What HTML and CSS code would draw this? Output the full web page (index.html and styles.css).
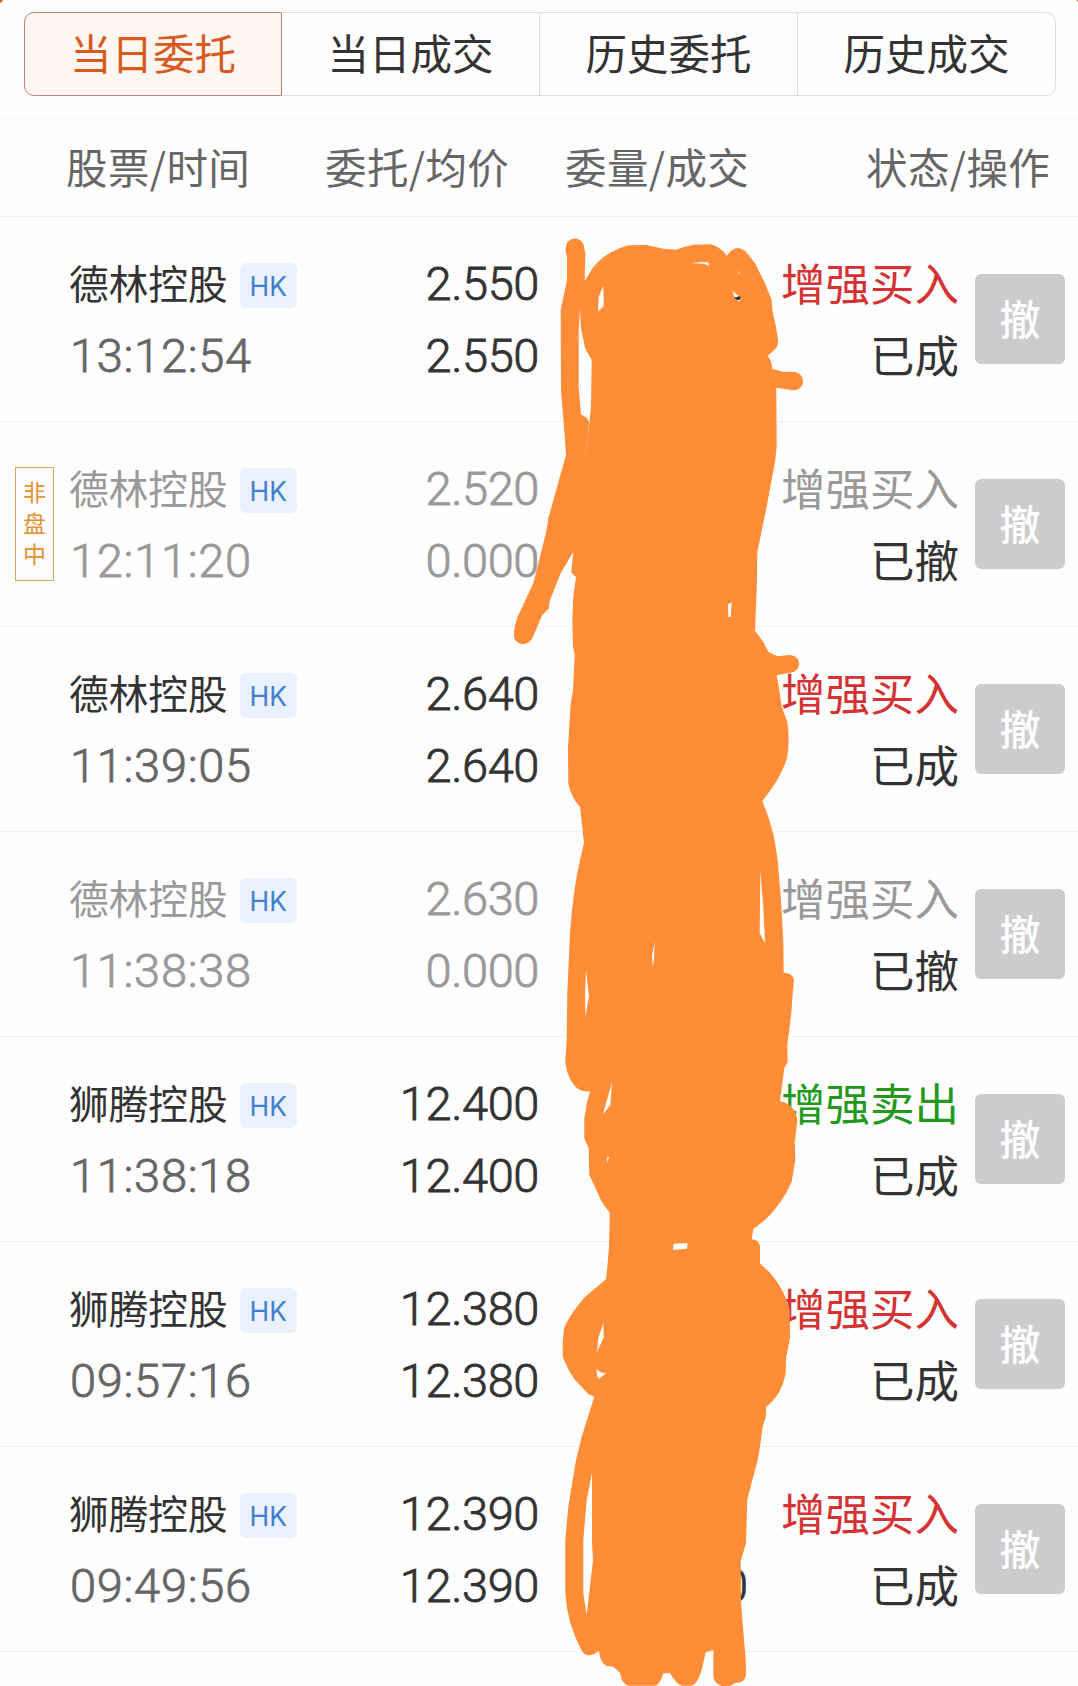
FILE: index.html
```html
<!DOCTYPE html>
<html lang="zh-CN">
<head>
<meta charset="utf-8">
<title>当日委托</title>
<link rel="stylesheet" href="styles.css">
</head>
<body>
<main class="page">
  <nav class="tabs">
    <a class="tab active">当日委托</a>
    <a class="tab">当日成交</a>
    <a class="tab">历史委托</a>
    <a class="tab">历史成交</a>
  </nav>
  <header class="columns">
    <span>股票/时间</span>
    <span>委托/均价</span>
    <span>委量/成交</span>
    <span>状态/操作</span>
  </header>
  <section class="orders">
    <article class="order">
      <div class="flag"></div>
      <div class="stock"><div class="name">德林控股<span class="market">HK</span></div><div class="num time">13:12:54</div></div>
      <div class="num price"><div>2.550</div><div>2.550</div></div>
      <div class="num qty"><div>0</div><div>0</div></div>
      <div class="status"><div class="buy">增强买入</div><div>已成</div></div>
      <button class="cancel">撤</button>
    </article>
    <article class="order withdrawn">
      <div class="flag"><span class="session">非<br>盘<br>中</span></div>
      <div class="stock"><div class="name">德林控股<span class="market">HK</span></div><div class="num time">12:11:20</div></div>
      <div class="num price"><div>2.520</div><div>0.000</div></div>
      <div class="num qty"></div>
      <div class="status"><div class="side">增强买入</div><div>已撤</div></div>
      <button class="cancel">撤</button>
    </article>
    <article class="order">
      <div class="flag"></div>
      <div class="stock"><div class="name">德林控股<span class="market">HK</span></div><div class="num time">11:39:05</div></div>
      <div class="num price"><div>2.640</div><div>2.640</div></div>
      <div class="num qty"></div>
      <div class="status"><div class="buy">增强买入</div><div>已成</div></div>
      <button class="cancel">撤</button>
    </article>
    <article class="order withdrawn">
      <div class="flag"></div>
      <div class="stock"><div class="name">德林控股<span class="market">HK</span></div><div class="num time">11:38:38</div></div>
      <div class="num price"><div>2.630</div><div>0.000</div></div>
      <div class="num qty"></div>
      <div class="status"><div class="side">增强买入</div><div>已撤</div></div>
      <button class="cancel">撤</button>
    </article>
    <article class="order">
      <div class="flag"></div>
      <div class="stock"><div class="name">狮腾控股<span class="market">HK</span></div><div class="num time">11:38:18</div></div>
      <div class="num price"><div>12.400</div><div>12.400</div></div>
      <div class="num qty"></div>
      <div class="status"><div class="sell">增强卖出</div><div>已成</div></div>
      <button class="cancel">撤</button>
    </article>
    <article class="order">
      <div class="flag"></div>
      <div class="stock"><div class="name">狮腾控股<span class="market">HK</span></div><div class="num time">09:57:16</div></div>
      <div class="num price"><div>12.380</div><div>12.380</div></div>
      <div class="num qty"></div>
      <div class="status"><div class="buy">增强买入</div><div>已成</div></div>
      <button class="cancel">撤</button>
    </article>
    <article class="order">
      <div class="flag"></div>
      <div class="stock"><div class="name">狮腾控股<span class="market">HK</span></div><div class="num time">09:49:56</div></div>
      <div class="num price"><div>12.390</div><div>12.390</div></div>
      <div class="num qty"><div>0</div><div>0</div></div>
      <div class="status"><div class="buy">增强买入</div><div>已成</div></div>
      <button class="cancel">撤</button>
    </article>
  </section>
  <!-- Marker scribble hiding the quantity column -->
  <svg class="marker" width="1078" height="1686" viewBox="0 0 1078 1686" aria-hidden="true">
    <path fill="#d9622b" d="M0 0H3L2 2L0 3Z M1078 0h-1.500l1.500 2Z"/>
    <path fill="#ff8d38" fill-rule="evenodd" d="M584.700 281 L588.300 275 L592 269 L596.700 263.300 L603 257.500 L610 252.700 L619 248.500 L628.300 245.300 L646.700 245 L663.300 248.700 L676 249.700 L684 247 L693.300 244.700 L710.700 244.300 Q721 247 726.700 255.700 Q732 248 738.300 248 Q744 249 748 254 L755 263.300 L765 283.300 L771.700 300 L772.300 310 L776 326.700 L778 340 Q778 346 776 348.300 L767.700 356 Q772 361 772.300 369 L783.300 371.700 L795 372 Q803 374 803.300 381.700 Q802 390 793.300 390.300 L776.300 387.700 L776.700 446.700 L775 461.700 L766.700 506.700 L757.300 551.700 L756.700 590 L755 631 L763.300 641.700 L768.300 651.700 L777.300 656.300 L790 655 Q799 656 799.300 664 Q798 672 790 672.700 L776.700 675.300 L779.300 690 L781.700 706.700 L787.300 721.700 Q790 740 787.300 756.700 Q782 777 762.300 801 L768.300 816.700 L774 836.700 L777.700 860 L780.700 896.700 L783.300 940 L783.700 972.700 Q793 973 794 980 L792.700 993.300 L791.300 1013.300 L787.300 1045 L787.700 1061.700 L784.300 1068.300 L780 1101.300 Q790 1103 795 1111.700 Q798 1119 797 1123.300 L794.700 1143.300 L795.300 1160 L791.700 1181.700 Q782 1204 765 1220 L753.300 1229 L751.700 1239.300 Q760 1240 760 1248.300 L760 1263.300 L770 1272.700 Q785 1290 789.700 1310 L790 1338.300 L786 1358.300 L785.700 1373.300 Q781 1396 766.300 1406.700 L765.700 1416.700 L762.700 1426.700 L760 1446.700 L757.700 1460 L747.300 1499.300 L746 1543.300 L740.700 1561 L741 1603.300 L745.700 1660 L746 1675 Q745 1683 736 1682.700 L730 1686 L721.700 1686 Q713 1683 713.300 1675 L713.300 1650 L705.700 1652.300 L701.700 1670 Q697 1685 691.700 1685.700 L681.700 1685.700 Q676 1684 670 1673 L663.300 1673.300 Q660 1685 655 1685.700 L628.300 1685.700 Q621 1683 620 1672.700 L613.300 1666.700 L606 1665.700 Q600 1662 599 1650.700 Q588 1660 581.700 1650.700 Q567 1623 565.300 1593.300 L565.300 1540 L568.300 1506.700 L576 1460 L581.700 1436.700 L594.300 1396.700 L588.300 1394 L575 1380 Q567 1368 562.700 1356.700 L562.700 1343 L564 1328.300 Q568 1317 585 1296.700 L606 1279.300 L607.300 1266.700 L609 1246.700 L609.700 1212.700 L601.700 1201.700 L589.300 1175 L588.700 1148.300 L584.300 1138.300 L584.300 1118.300 Q586 1104 590 1091 Q575 1094 567.700 1073.300 Q565 1064 565.300 1060 L566.700 1040 L567.300 993.300 L570 933.300 Q573 890 580 860 L584 842.700 L580 806.700 Q571 798 568.300 783.300 L568 746.700 L570.700 703.300 L573 690 L574.700 655 L573 646.700 L572.300 620 L573.300 596.700 L576 577 L571.300 572.700 L573.300 551.700 L560.700 573.300 L550 600 L548.300 609.300 L542.300 615 L532.300 638.300 Q529 644 522.700 644.300 Q514 643 514 635 Q514 626 518 616 L533.300 583.300 L546.700 530 L548.300 518.300 L566 455 L565 440 L561 390 L560.700 310 L567 280 L567 256.700 Q564 250 567 242.500 Q572 237 578 239 Q583 241 584 246.700 L585.300 253.300 Z
    M580 307 L578.700 330 L578.700 386.700 L581 414.300 L586.700 417.700 L589 421.700 L588 436.700 L584.300 460 L587.700 440 L591 406.700 L591.700 360 L585 348 L580.700 326.700 Z
    M603.300 285.700 L598.700 296.700 L598 311.700 L603.700 306 Z
    M691.700 263.300 L700 262 L708 262.300 L709.300 265.700 L703.300 263.700 Z
    M737.300 270 L740.700 274.300 L738.700 273.300 Z
    M732.300 291 L740.700 297.300 L739.300 301.700 L735 298.300 Z
    M728 604 L731.700 602.700 L730.700 617 L728.300 617 Z
    M760.300 871.700 L759.700 933.300 L765 943.300 L763.300 906.700 Z
    M654.700 941.700 L652 955 L652.700 966.700 L654 960 Z
    M586 970 L585 993 L585.300 1016.700 L589 996.700 Z
    M612 1082 L603 1114.300 L610.300 1105 Z
    M607.300 1156.700 L609 1157.300 L607 1162.700 Z
    M673.700 1243.700 L687.700 1243 L687 1248.700 L673 1250 Z
    M603.300 1323.300 L598.300 1338.300 L597 1352.300 L603.700 1337.300 Z
    M596.300 1369.300 L601.700 1372.700 L606 1373.300 L599.300 1378.700 L597.300 1376.700 Z
    M592 1472.700 L586.700 1500 L583.300 1540 L583.300 1593.300 L586.700 1615 L593 1560 L592 1543.300 Z"/>
  </svg>
</main>
</body>
</html>
```
FILE: styles.css
```css
* { box-sizing: border-box; }

body {
  margin: 0;
  background: #fefefe;
  color: #333;
  font-family: "Noto Sans CJK SC", sans-serif;
}

.page {
  position: relative;
  width: 1078px;
  height: 1686px;
  padding-top: 12px;
  overflow: hidden;
}

.tabs {
  display: grid;
  grid-template-columns: repeat(4, 1fr);
  height: 84px;
  margin: 0 22px 0 24px;
}

.tab {
  border: 1px solid #dcdedf;
  border-left-width: 0;
  font-size: 41.5px;
  line-height: 79px;
  text-align: center;
}

.tab:last-child { border-radius: 0 10px 10px 0; }

.tab.active {
  border: 1px solid #c08468;
  border-radius: 10px 0 0 10px;
  background: #fdf6f1;
  color: #d85a1c;
}

.columns {
  display: grid;
  grid-template-columns: 259px 240px 301px 1fr;
  height: 98px;
  margin-top: 23px;
  padding-left: 66px;
  border-top: 1px solid #f8f8f8;
  border-bottom: 1px solid #f0f1f2;
  color: #666;
  font-size: 41.5px;
  letter-spacing: 0.4px;
  line-height: 93px;
  white-space: nowrap;
}

.order {
  display: grid;
  grid-template-columns: 69px 301px 169px 209px 211px 106px;
  height: 205px;
  padding-top: 31px;
  border-bottom: 1px solid #f0f1f2;
  font-size: 44.5px;
  line-height: 71.500px;
  white-space: nowrap;
}

.flag { padding: 14px 0 0 15px; }

.session {
  display: block;
  width: 39px;
  height: 114px;
  padding-top: 8px;
  border: 1px solid #dfa55b;
  color: #e29233;
  font-size: 23px;
  line-height: 31px;
  text-align: center;
}

.name {
  display: flex;
  height: 71.500px;
  font-size: 39.700px;
  line-height: 68px;
}

.market {
  width: 57px;
  height: 45px;
  margin: 15px 0 0 12px;
  border-radius: 6px;
  background: #e9f1fc;
  color: #427fcc;
  font: 26.500px/47px Inter, sans-serif;
  text-align: center;
}

.num {
  font-family: Roboto, sans-serif;
  font-size: 47px;
  font-weight: 300;
  -webkit-text-stroke: 0.8px currentColor;
}

.time {
  padding-left: 1px;
  color: #666;
  letter-spacing: 0.700px;
}

.price, .qty, .status { text-align: right; }

.price { letter-spacing: -0.4px; }

.status { margin-top: -2px; }

.buy { color: #d43233; }
.sell { color: #22991c; }

.withdrawn .name,
.withdrawn .time,
.withdrawn .price,
.withdrawn .side { color: #999; }

.cancel {
  width: 90px;
  height: 90px;
  margin: 26px 0 0 16px;
  padding: 0 0 4px;
  border: 0;
  border-radius: 6px;
  background: #ccc;
  color: #fff;
  font: 500 41px/86px "Noto Sans CJK SC", sans-serif;
}

.marker {
  position: absolute;
  top: 0;
  left: 0;
}
```
